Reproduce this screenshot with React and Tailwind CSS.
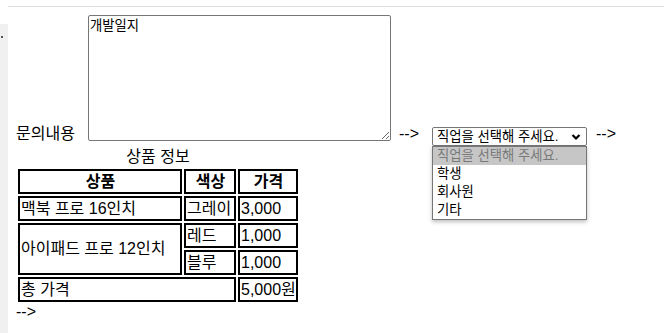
import { useState } from "react";

const font = "font-['Liberation_Sans','Noto_Sans_CJK_KR',sans-serif]";

const jobs = ["학생", "회사원", "기타"];

function JobSelect() {
  const [open] = useState(true);

  return (
    <div className="relative mt-[112px] ml-[13px]">
      <div className="flex h-[19px] w-[155px] items-center justify-between rounded-[2px] border border-[#767676] bg-white pl-[4px] pr-[4px] text-[13.33px] leading-[17px] text-black">
        <span>직업을 선택해 주세요.</span>
        <svg width="10" height="8" viewBox="0 0 10 8" className="mr-[1px]">
          <polyline
            points="1.5,2 5,5.5 8.5,2"
            fill="none"
            stroke="#000"
            strokeWidth="2.2"
          />
        </svg>
      </div>

      {open && (
        <div className="absolute left-0 top-full z-10 w-[155px] border border-[#767676] bg-white py-[0px] text-[13.33px] leading-[18px] shadow-[0_2px_4px_rgba(0,0,0,0.25)]">
          <div className="bg-[#c6c6c6] pl-[4px] text-[#7a7a7a]">직업을 선택해 주세요.</div>
          {jobs.map((job) => (
            <div key={job} className="pl-[4px] text-black">
              {job}
            </div>
          ))}
        </div>
      )}
    </div>
  );
}

function ProductTable() {
  const cell = "h-[25px] border-2 border-black p-0 pl-[1px] whitespace-nowrap overflow-hidden align-middle";

  return (
    <table className="mt-[1px] table-fixed border-separate border-spacing-[2px] text-[16px] leading-[20px] text-black">
      <caption className="leading-[20px]">상품 정보</caption>
      <colgroup>
        <col className="w-[164px]" />
        <col className="w-[52px]" />
        <col className="w-[60px]" />
      </colgroup>
      <thead>
        <tr>
          <th className={`${cell} text-center font-bold`}>상품</th>
          <th className={`${cell} text-center font-bold`}>색상</th>
          <th className={`${cell} text-center font-bold`}>가격</th>
        </tr>
      </thead>
      <tbody>
        <tr>
          <td className={cell}>맥북 프로 16인치</td>
          <td className={cell}>그레이</td>
          <td className={cell}>3,000</td>
        </tr>
        <tr>
          <td rowSpan={2} className={cell}>
            아이패드 프로 12인치
          </td>
          <td className={cell}>레드</td>
          <td className={cell}>1,000</td>
        </tr>
        <tr>
          <td className={cell}>블루</td>
          <td className={cell}>1,000</td>
        </tr>
        <tr>
          <td colSpan={2} className={cell}>
            총 가격
          </td>
          <td className={cell}>5,000원</td>
        </tr>
      </tbody>
    </table>
  );
}

export default function App() {
  return (
    <div className={`flex h-[333px] w-[664px] overflow-hidden bg-white ${font}`}>
      {/* left edge strip */}
      <div className="flex w-[8px] shrink-0 flex-col">
        <div className="h-[24px]" />
        <div className="flex-1 bg-[#f0f0f0]">
          <div className="ml-[1px] mt-[12px] h-[2px] w-[2px] bg-[#555]" />
        </div>
      </div>

      <div className="flex min-w-0 flex-1 flex-col">
        <div className="h-[7px] shrink-0 border-b border-[#dedede]" />

        <div className="px-[8px] pt-[8px] text-[16px] text-black">
          <div className="flex items-start">
            <span className="mt-[109px] w-[72px] leading-[20px]">문의내용</span>
            <textarea
              readOnly
              defaultValue="개발일지"
              className="h-[126px] w-[303px] rounded-[2px] border border-[#767676] bg-white px-[1px] py-[1px] text-[13.33px] leading-[17px] text-black outline-none"
            />
            <span className="ml-[8px] mt-[109px] leading-[20px]">--&gt;</span>
            <JobSelect />
            <span className="ml-[9px] mt-[109px] leading-[20px]">--&gt;</span>
          </div>

          <ProductTable />

          <div className="leading-[16px]">--&gt;</div>
        </div>
      </div>
    </div>
  );
}
